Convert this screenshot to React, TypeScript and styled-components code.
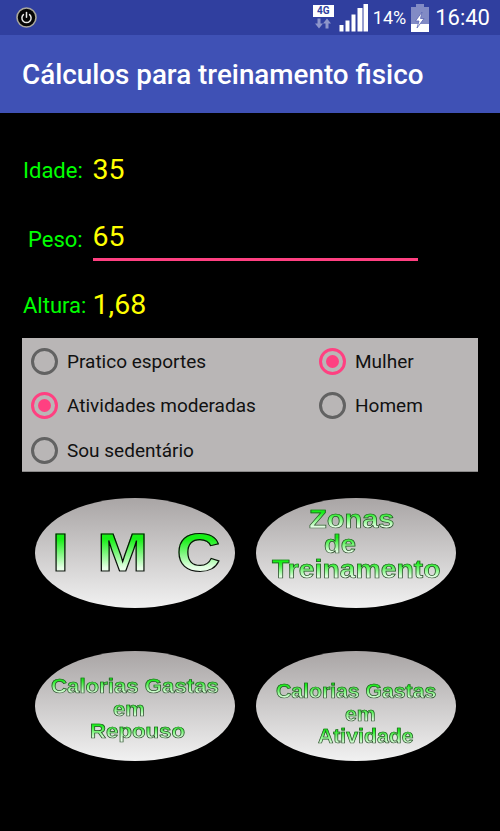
import React from "react";
import styled, { createGlobalStyle } from "styled-components";

const Global = createGlobalStyle`
  html, body { margin: 0; padding: 0; background: #000; }
  body { font-family: Roboto, "Liberation Sans", sans-serif; }
  * { box-sizing: border-box; }
`;

const Page = styled.div`
  width: 500px;
  height: 831px;
  background: #000;
  overflow: hidden;
  display: flex;
  flex-direction: column;
`;

const StatusBar = styled.div`
  height: 35px;
  background: #303f9f;
  display: flex;
  align-items: center;
  padding: 0 10px 0 16px;
  color: #fff;
`;

const StatusRight = styled.div`
  margin-left: auto;
  display: flex;
  align-items: center;
`;

const NetworkStack = styled.div`
  width: 21px;
  display: flex;
  flex-direction: column;
  align-items: center;
  margin-right: 5px;
`;

const Badge4G = styled.span`
  width: 21px;
  height: 12px;
  background: #fff;
  color: #303f9f;
  font: 700 10px/12px Roboto, sans-serif;
  text-align: center;
  display: block;
`;

const Percent = styled.span`
  font-size: 18px;
  line-height: 20px;
  margin: 0 5px 0 5px;
`;

const Clock = styled.span`
  font-size: 22px;
  line-height: 30px;
  margin-left: 6px;
`;

const AppBar = styled.div`
  height: 78px;
  background: #3f51b5;
  display: flex;
  align-items: center;
  padding: 0 0 0 22px;
  color: #fff;
  font-size: 27.8px;
  font-weight: 500;
`;

const Form = styled.div`
  display: flex;
  flex-direction: column;
  padding-top: 34px;
`;

const Field = styled.div<{ $h: number; $mt?: number }>`
  height: ${(p) => p.$h}px;
  margin-top: ${(p) => p.$mt ?? 0}px;
  display: flex;
  align-items: center;
  padding-left: 22px;
`;

const FieldLabel = styled.span<{ $indent?: number }>`
  width: 70.5px;
  padding-left: ${(p) => p.$indent ?? 1}px;
  color: #00ff00;
  font-size: 22px;
  line-height: 28px;
  margin-top: 4px;
  white-space: nowrap;
`;

const FieldValue = styled.div<{ $focused?: boolean }>`
  width: 325.5px;
  height: 100%;
  color: #ffff00;
  font-size: 28.5px;
  display: flex;
  align-items: center;
  border-bottom: ${(p) => (p.$focused ? "3px solid #ff4081" : "none")};
`;

const Panel = styled.div`
  margin: 12px 22px 0;
  height: 134px;
  background: #b9b6b6;
  border-bottom: 1px solid #8b8989;
  display: grid;
  grid-template-columns: 288px 1fr;
  grid-auto-rows: 44.5px;
  padding: 1px 0 0 9px;
`;

const RadioRow = styled.div`
  display: flex;
  align-items: center;
  gap: 9px;
  color: #111;
  font-size: 19px;
`;

const RadioCircle = styled.span<{ $on?: boolean }>`
  width: 27px;
  height: 27px;
  border-radius: 50%;
  border: 3px solid ${(p) => (p.$on ? "#ff4081" : "#626262")};
  display: flex;
  align-items: center;
  justify-content: center;
  flex: none;
  &::after {
    content: "";
    width: 13px;
    height: 13px;
    border-radius: 50%;
    background: ${(p) => (p.$on ? "#ff4081" : "transparent")};
  }
`;

const OvalGrid = styled.div`
  margin-top: 26px;
  padding-left: 35px;
  display: grid;
  grid-template-columns: 200px 200px;
  grid-auto-rows: 110px;
  column-gap: 21px;
  row-gap: 43px;
`;

const Oval = styled.div<{ $top: number }>`
  border-radius: 50%;
  background: linear-gradient(#a9a5a5, #f1f1f1);
  padding-top: ${(p) => p.$top}px;
  display: flex;
  flex-direction: column;
  align-items: flex-start;
  filter: blur(0.4px);
`;

const OvalLine = styled.span<{ $x: number; $size: number; $h: number; $sx: number; $track?: number; $strong?: boolean }>`
  display: block;
  margin-left: ${(p) => p.$x}px;
  height: ${(p) => p.$h}px;
  line-height: ${(p) => p.$h}px;
  font-family: "Liberation Sans", Arial, sans-serif;
  font-weight: 700;
  font-size: ${(p) => p.$size}px;
  letter-spacing: ${(p) => p.$track ?? 0}px;
  white-space: nowrap;
  transform: scaleX(${(p) => p.$sx});
  transform-origin: left center;
  color: transparent;
  background: linear-gradient(#16f016 22%, #e8ffe8 80%);
  -webkit-background-clip: text;
  background-clip: text;
  -webkit-text-stroke: ${(p) => (p.$strong ? "1.1px #0b0b0b" : "0.7px #2c4a2c")};
`;

const PowerIcon = () => (
  <svg width="21" height="21" viewBox="0 0 21 21">
    <circle cx="10.5" cy="10.5" r="9.5" fill="#050505" stroke="#a9a79c" strokeWidth="1.6" />
    <path d="M7.4 7.6a4.6 4.6 0 1 0 6.2 0" fill="none" stroke="#e8e8e8" strokeWidth="1.5" strokeLinecap="round" />
    <path d="M10.5 5.6v4.6" stroke="#e8e8e8" strokeWidth="1.5" strokeLinecap="round" />
  </svg>
);

const Arrows = () => (
  <svg width="18" height="13" viewBox="0 0 18 13" style={{ display: "block" }}>
    <path d="M6.5 1.5v5H9l-4 5-4-5h2.5v-5zM14.5 11.5v-5H17l-4-5-4 5h2.5v5z" fill="#fff" fillOpacity="0.45" />
  </svg>
);

const Signal = () => (
  <svg width="29" height="28" viewBox="0 0 29 28" style={{ display: "block" }}>
    <g fill="#fff">
      <rect x="0.5" y="21" width="4" height="6.5" />
      <rect x="6.5" y="16.5" width="4" height="11" />
      <rect x="12.5" y="10.5" width="4" height="17" />
      <rect x="18.5" y="4" width="5" height="23.5" />
      <rect x="24.5" y="0" width="4.5" height="27.5" />
    </g>
  </svg>
);

const Battery = () => (
  <svg width="18" height="28" viewBox="0 0 18 28" style={{ display: "block" }}>
    <path d="M5 0h8v3h5v25H0V3h5z" fill="#fff" fillOpacity="0.4" />
    <rect x="0" y="20" width="18" height="8" fill="#fff" />
    <path d="M11 8 4.5 17H8l-2 7 7-9.5H9.5z" fill="#fff" stroke="#5a66b4" strokeWidth="0.8" />
  </svg>
);

export default function App() {
  return (
    <Page>
      <Global />
      <StatusBar>
        <PowerIcon />
        <StatusRight>
          <NetworkStack>
            <Badge4G>4G</Badge4G>
            <Arrows />
          </NetworkStack>
          <Signal />
          <Percent>14%</Percent>
          <Battery />
          <Clock>16:40</Clock>
        </StatusRight>
      </StatusBar>
      <AppBar>Cálculos para treinamento fisico</AppBar>
      <Form>
        <Field $h={44}>
          <FieldLabel>Idade:</FieldLabel>
          <FieldValue>35</FieldValue>
        </Field>
        <Field $h={46} $mt={24}>
          <FieldLabel $indent={6}>Peso:</FieldLabel>
          <FieldValue $focused>65</FieldValue>
        </Field>
        <Field $h={44} $mt={21}>
          <FieldLabel>Altura:</FieldLabel>
          <FieldValue>1,68</FieldValue>
        </Field>
      </Form>
      <Panel>
        <RadioRow><RadioCircle />Pratico esportes</RadioRow>
        <RadioRow><RadioCircle $on />Mulher</RadioRow>
        <RadioRow><RadioCircle $on />Atividades moderadas</RadioRow>
        <RadioRow><RadioCircle />Homem</RadioRow>
        <RadioRow><RadioCircle />Sou sedentário</RadioRow>
      </Panel>
      <OvalGrid>
        <Oval $top={30}>
          <OvalLine $x={17} $size={53} $h={50} $sx={1.15} $track={5} $strong>I M C</OvalLine>
        </Oval>
        <Oval $top={9}>
          <OvalLine $x={53} $size={25} $h={25} $sx={1.16}>Zonas</OvalLine>
          <OvalLine $x={68} $size={25} $h={25} $sx={1.1}>de</OvalLine>
          <OvalLine $x={16} $size={25} $h={25} $sx={1.134}>Treinamento</OvalLine>
        </Oval>
        <Oval $top={24}>
          <OvalLine $x={16} $size={20} $h={22.5} $sx={1.11}>Calorias Gastas</OvalLine>
          <OvalLine $x={78} $size={20} $h={22.5} $sx={1.1}>em</OvalLine>
          <OvalLine $x={55} $size={20} $h={22.5} $sx={1.11}>Repouso</OvalLine>
        </Oval>
        <Oval $top={29}>
          <OvalLine $x={20} $size={20} $h={22.5} $sx={1.06}>Calorias Gastas</OvalLine>
          <OvalLine $x={89} $size={20} $h={22.5} $sx={1.06}>em</OvalLine>
          <OvalLine $x={62} $size={20} $h={22.5} $sx={1.06}>Atividade</OvalLine>
        </Oval>
      </OvalGrid>
    </Page>
  );
}
